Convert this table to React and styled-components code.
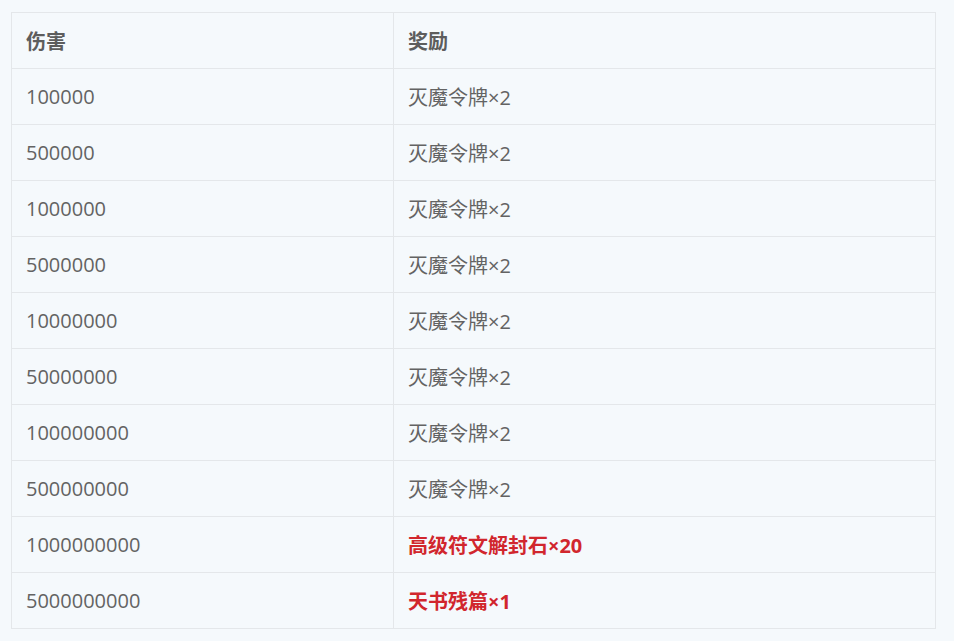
import styled, { createGlobalStyle } from "styled-components";

const GlobalStyle = createGlobalStyle`
  html, body {
    margin: 0;
    padding: 0;
    background-color: #f5f9fc;
  }
`;

const Page = styled.div`
  padding: 12px 18px 0 11px;
  font-family: "Open Sans", "Noto Sans CJK SC", sans-serif;
`;

const Table = styled.table`
  width: 100%;
  border-collapse: collapse;
  background-color: #f5f9fc;
  border: 1px solid #e4e7ea;
`;

const Cell = styled.td`
  height: 56px;
  padding: 0 14px;
  border: 1px solid #e4e7ea;
  font-size: 20px;
  color: ${(p) => (p.$red ? "#d1262d" : "#636363")};
  font-weight: ${(p) => (p.$bold ? 700 : 400)};
  width: ${(p) => p.$w || "auto"};
  box-sizing: border-box;
`;

const Head = styled(Cell).attrs({ as: "th" })`
  text-align: left;
  font-weight: 700;
  color: #5d5d5d;
`;

const rows = [
  ["100000", "灭魔令牌×2"],
  ["500000", "灭魔令牌×2"],
  ["1000000", "灭魔令牌×2"],
  ["5000000", "灭魔令牌×2"],
  ["10000000", "灭魔令牌×2"],
  ["50000000", "灭魔令牌×2"],
  ["100000000", "灭魔令牌×2"],
  ["500000000", "灭魔令牌×2"],
  ["1000000000", "高级符文解封石×20", true],
  ["5000000000", "天书残篇×1", true],
];

const App = () => {
  return (
    <Page>
      <GlobalStyle />
      <Table>
        <thead>
          <tr>
            <Head $w="382px">伤害</Head>
            <Head>奖励</Head>
          </tr>
        </thead>
        <tbody>
          {rows.map(([dmg, reward, hot]) => (
            <tr key={dmg}>
              <Cell>{dmg}</Cell>
              <Cell $red={hot} $bold={hot}>
                {reward}
              </Cell>
            </tr>
          ))}
        </tbody>
      </Table>
    </Page>
  );
};

export default App;
